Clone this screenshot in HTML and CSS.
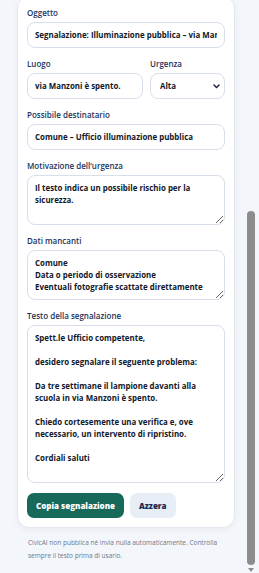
FILE: index.html
```html
<!DOCTYPE html>
<html lang="it">
<head>
  <meta charset="UTF-8">
  <meta name="viewport" content="width=device-width, initial-scale=1.0">
  <title>CivicAI – Segnalazioni</title>
  <link rel="stylesheet" href="styles.css">
</head>
<body>

  <div class="page">
    <div class="card">
      <form id="report-form">
        <div class="form-group">
          <label for="oggetto">Oggetto</label>
          <input type="text" id="oggetto" value="Segnalazione: Illuminazione pubblica – via Manzoni">
        </div>
        <div class="form-row">
          <div class="form-group">
            <label for="luogo">Luogo</label>
            <input type="text" id="luogo" value="via Manzoni è spento.">
          </div>
          <div class="form-group">
            <label for="urgenza">Urgenza</label>
            <div class="select-wrap">
              <select id="urgenza">
                <option>Bassa</option>
                <option>Media</option>
                <option selected>Alta</option>
              </select>
              <svg class="chevron" width="7" height="5" viewBox="0 0 7 5"><path d="M1 1l2.5 2.5L6 1" fill="none" stroke="#1c2540" stroke-width="1.5" stroke-linecap="round" stroke-linejoin="round"/></svg>
            </div>
          </div>
        </div>
        <div class="form-group">
          <label for="destinatario">Possibile destinatario</label>
          <input type="text" id="destinatario" value="Comune – Ufficio illuminazione pubblica">
        </div>
        <div class="form-group">
          <label for="motivazione">Motivazione dell’urgenza</label>
          <textarea id="motivazione" class="ta-short">Il testo indica un possibile rischio per la sicurezza.</textarea>
        </div>
        <div class="form-group">
          <label for="mancanti">Dati mancanti</label>
          <textarea id="mancanti" class="ta-short">Comune
Data o periodo di osservazione
Eventuali fotografie scattate direttamente</textarea>
        </div>
        <div class="form-group">
          <label for="testo">Testo della segnalazione</label>
          <textarea id="testo" class="ta-long">Spett.le Ufficio competente,

desidero segnalare il seguente problema:

Da tre settimane il lampione davanti alla scuola in via Manzoni è spento.

Chiedo cortesemente una verifica e, ove necessario, un intervento di ripristino.

Cordiali saluti</textarea>
        </div>
        <div class="actions">
          <button type="button" class="btn-primary" id="copy-btn">Copia segnalazione</button>
          <button type="reset" class="btn-secondary">Azzera</button>
        </div>
      </form>
    </div>

    <p class="note">CivicAI non pubblica né invia nulla automaticamente. Controlla sempre il testo prima di usario.</p>
  </div>

  <!-- barra di scorrimento disegnata sopra la pagina -->
  <div class="scrollbar">
    <div class="scrollbar-thumb"></div>
    <div class="scrollbar-arrow"></div>
  </div>

  <script>
    // Copia il testo finale negli appunti
    document.getElementById('copy-btn').addEventListener('click', function() {
      const testo = document.getElementById('testo').value;
      if (navigator.clipboard) {
        navigator.clipboard.writeText(testo);
      }
    });

    // La vista parte dalla fine del modulo
    function scrollToBottom() {
      window.scrollTo(0, document.documentElement.scrollHeight);
    }
    scrollToBottom();
    window.addEventListener('load', scrollToBottom);
  </script>

</body>
</html>
```

FILE: styles.css
```css
* {
  box-sizing: border-box;
}

body {
  margin: 0;
  font-family: "Open Sans", "Noto Sans", Arial, sans-serif;
  background-color: #f3f6fa;
  color: #1c2540;
}

.page {
  padding: 16px 24px 11px 17px;
}

.card {
  background: #fff;
  border: 1px solid #e3e8f0;
  border-radius: 12px;
  padding: 10px 9px 9px;
  margin-bottom: 8px;
  box-shadow: 0 2px 6px rgba(30, 45, 80, 0.05);
}

.form-group {
  margin-bottom: 10px;
}

.form-row {
  display: grid;
  grid-template-columns: 1fr 75px;
  gap: 7px;
}

.form-group label {
  display: block;
  font-size: 8px;
  font-weight: 600;
  line-height: 12px;
  margin-bottom: 3px;
  color: #22335a;
}

.form-group input,
.form-group select,
.form-group textarea {
  display: block;
  width: 100%;
  font-family: inherit;
  font-size: 7.9px;
  font-weight: 700;
  line-height: 12px;
  color: #12182a;
  background: #fff;
  border: 1px solid #d7dfea;
  border-radius: 8px;
}

.form-group input {
  height: 26px;
  padding: 0 7px;
}

.select-wrap {
  position: relative;
}

.form-group select {
  height: 26px;
  padding: 0 18px 0 9px;
  appearance: none;
  -webkit-appearance: none;
}

.chevron {
  position: absolute;
  right: 5px;
  top: 11px;
  pointer-events: none;
}

.form-group textarea {
  padding: 6px 7px;
  margin-bottom: 1px;
}

.ta-short {
  height: 50px;
}

.ta-long {
  height: 158px;
}

.actions {
  display: flex;
  gap: 6px;
}

.actions button {
  height: 25px;
  padding: 0 9px;
  border: none;
  border-radius: 7px;
  font-family: inherit;
  font-size: 8px;
  font-weight: 800;
  cursor: pointer;
}

.btn-primary {
  background-color: #17695a;
  color: #fff;
}

.btn-primary:hover {
  background-color: #115446;
}

.btn-secondary {
  background-color: #e8eef6;
  color: #1b2a4e;
}

.note {
  margin: 0;
  padding: 0 4px 0 11px;
  font-size: 6.5px;
  line-height: 13px;
  color: #6b788f;
}

.scrollbar {
  position: fixed;
  top: 0;
  right: 0;
  bottom: 0;
  width: 15px;
}

.scrollbar-thumb {
  position: absolute;
  top: 211px;
  bottom: 8px;
  left: 3px;
  width: 8px;
  border-radius: 4px;
  background: #8c8c8c;
}

.scrollbar-arrow {
  position: absolute;
  bottom: 1px;
  left: 4px;
  width: 0;
  height: 0;
  border-left: 3px solid transparent;
  border-right: 3px solid transparent;
  border-top: 4px solid #8c8c8c;
}
```
